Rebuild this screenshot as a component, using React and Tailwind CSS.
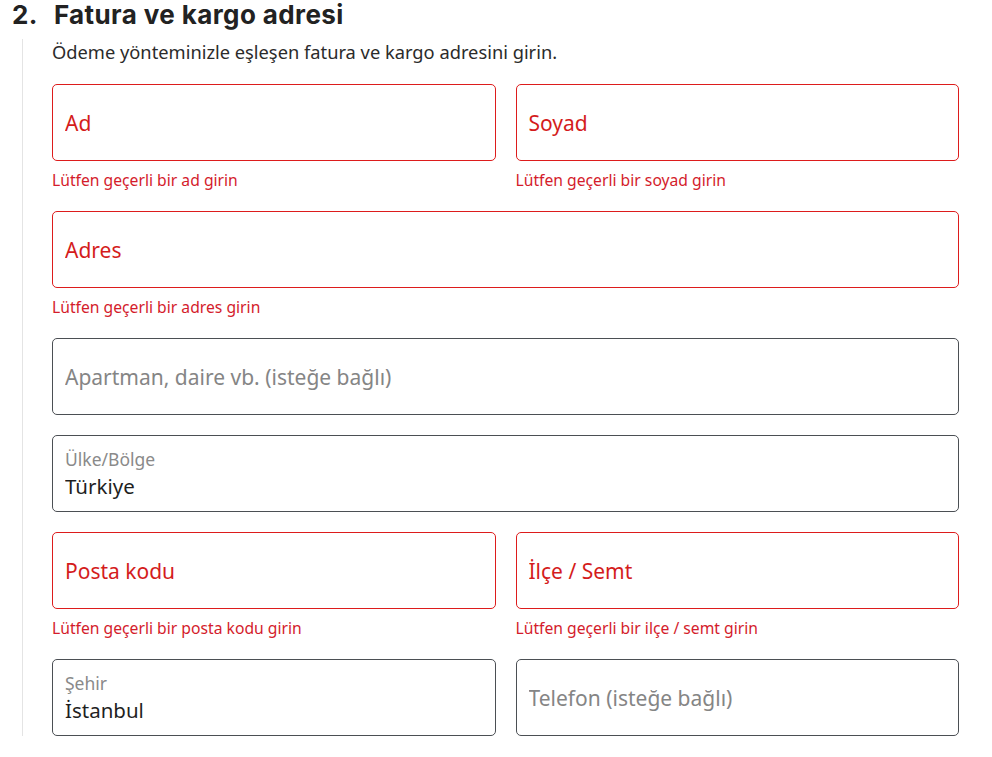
import { useState } from 'react';

const body = { fontFamily: '"Noto Sans", "Open Sans", sans-serif' };

function Field({ label, value, error, onChange }) {
  const filled = value !== undefined && value !== '';
  const invalid = Boolean(error);
  return (
    <div className="flex flex-col">
      <label
        className={`h-[77px] rounded-[5px] border px-[12px] flex flex-col justify-center bg-white ${
          invalid ? 'border-[#dd1c1c]' : 'border-[#4b4f54]'
        } ${filled ? 'pt-[4px]' : ''}`}
      >
        {filled ? (
          <>
            <span className="text-[17.5px] leading-[20px] text-[#8a8a8a]">{label}</span>
            <input
              value={value}
              onChange={(e) => onChange?.(e.target.value)}
              className="text-[20.5px] leading-[34px] text-[#1f1f1f] outline-none bg-transparent"
              style={body}
            />
          </>
        ) : (
          <input
            placeholder={label}
            onChange={(e) => onChange?.(e.target.value)}
            className={`text-[21px] leading-[30px] outline-none bg-transparent ${
              invalid ? 'placeholder:text-[#d41c1c]' : 'placeholder:text-[#858585]'
            }`}
            style={body}
          />
        )}
      </label>
      {invalid && (
        <p className="mt-[8px] text-[15.7px] leading-[22px] text-[#d41c2c]">{error}</p>
      )}
    </div>
  );
}

export default function App() {
  const [country, setCountry] = useState('Türkiye');
  const [city, setCity] = useState('İstanbul');

  return (
    <div className="min-h-screen bg-white pl-[12px]" style={body}>
      <h2
        className="text-[26px] leading-[30px] font-bold text-[#222] flex gap-[16px] tracking-[0.4px]"
        style={{ fontFamily: '"Inter", "Lato", sans-serif' }}
      >
        <span>2.</span>
        <span>Fatura ve kargo adresi</span>
      </h2>
      <div className="ml-[10px] mt-[9px] border-l border-[#e4e4e4] pl-[29px] w-[937px]">
        <p className="text-[18.3px] leading-[26px] text-[#2b2b2b] mb-[19px]">
          Ödeme yönteminizle eşleşen fatura ve kargo adresini girin.
        </p>
        <div className="flex flex-col gap-[20px]">
          <div className="grid grid-cols-2 gap-[20px]">
            <Field label="Ad" error="Lütfen geçerli bir ad girin" />
            <Field label="Soyad" error="Lütfen geçerli bir soyad girin" />
          </div>
          <Field label="Adres" error="Lütfen geçerli bir adres girin" />
          <Field label="Apartman, daire vb. (isteğe bağlı)" />
          <Field label="Ülke/Bölge" value={country} onChange={setCountry} />
          <div className="grid grid-cols-2 gap-[20px]">
            <Field label="Posta kodu" error="Lütfen geçerli bir posta kodu girin" />
            <Field label="İlçe / Semt" error="Lütfen geçerli bir ilçe / semt girin" />
          </div>
          <div className="grid grid-cols-2 gap-[20px]">
            <Field label="Şehir" value={city} onChange={setCity} />
            <Field label="Telefon (isteğe bağlı)" />
          </div>
        </div>
      </div>
    </div>
  );
}
